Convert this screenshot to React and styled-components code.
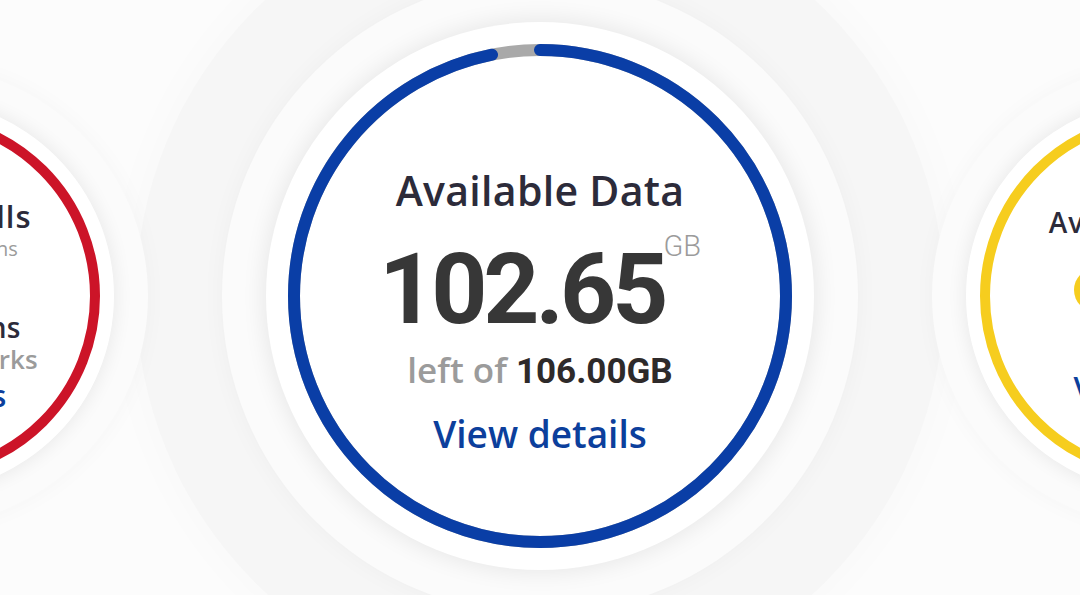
import React from 'react';
import styled, {createGlobalStyle} from 'styled-components';

const COLORS = {
  page: '#fcfcfc',
  white: '#ffffff',
  title: '#2c2b3a',
  number: '#373737',
  muted: '#9b9b9b',
  strong: '#2e2a2a',
  link: '#0c3f9c',
  blue: '#0a3ea6',
  track: '#a9a9a9',
  red: '#cc1428',
  yellow: '#f6cd1e',
};

const GlobalStyle = createGlobalStyle`
  html, body {
    margin: 0;
    padding: 0;
    background: ${COLORS.page};
    overflow: hidden;
  }
  body {
    font-family: "Open Sans", "Noto Sans", sans-serif;
  }
`;

// arc drawn clockwise from startDeg to endDeg (0 = top), caps included
const Ring = ({size, radius, stroke, color, track, startDeg = 0, endDeg = 360}) => {
  const c = size / 2;
  const circ = 2 * Math.PI * radius;
  const full = endDeg - startDeg >= 360;
  const capDeg = (stroke / 2 / radius) * (180 / Math.PI);
  const start = ((startDeg + capDeg) / 360) * circ;
  const len = ((endDeg - startDeg - 2 * capDeg) / 360) * circ;
  return (
    <RingSvg width={size} height={size} viewBox={`0 0 ${size} ${size}`}>
      {track && <circle cx={c} cy={c} r={radius} fill="none" stroke={track} strokeWidth={stroke}/>}
      <circle
        cx={c}
        cy={c}
        r={radius}
        fill="none"
        stroke={color}
        strokeWidth={stroke}
        strokeLinecap="round"
        strokeDasharray={full ? undefined : `${len} ${circ}`}
        strokeDashoffset={full ? undefined : -start}
        transform={`rotate(-90 ${c} ${c})`}
      />
    </RingSvg>
  );
};

const App = () => {
  const left = 102.65;
  const total = 106;

  return (
    <>
      <GlobalStyle/>
      <Stage>
        <Disc $size={394} $side>
          <Ring size={394} radius={178} stroke={10} color={COLORS.red}/>
          <Content $pad={20}>
            <SideTitle>Available Calls</SideTitle>
            <SideNote>Local, STD &amp; ISD mins</SideNote>
            <SideValue $color={COLORS.red}>Unlimited</SideValue>
            <SideStrong>Unlimited mins</SideStrong>
            <SideMuted>across all networks</SideMuted>
            <SideLink href="#">View details</SideLink>
          </Content>
        </Disc>

        <Disc $size={548}>
          <Ring
            size={548}
            radius={246}
            stroke={12}
            color={COLORS.blue}
            track={COLORS.track}
            startDeg={-2}
            endDeg={350}
          />
          <Content $pad={31}>
            <Title>Available Data</Title>
            <Amount>
              <Figure>{left.toFixed(2)}</Figure>
              <Unit>GB</Unit>
            </Amount>
            <Remain>left of <b>{total.toFixed(2)}GB</b></Remain>
            <Link href="#">View details</Link>
          </Content>
        </Disc>

        <Disc $size={394} $side>
          <Ring size={394} radius={178} stroke={10} color={COLORS.yellow}/>
          <Content $pad={18}>
            <SideTitle $small>Available Credit</SideTitle>
            <CreditRow>
              <svg width="44" height="44" viewBox="0 0 44 44">
                <circle cx="22" cy="22" r="22" fill={COLORS.yellow}/>
                <circle cx="22" cy="22" r="15" fill="none" stroke="#e2b70f" strokeWidth="2"/>
              </svg>
              <CreditValue>25.00</CreditValue>
            </CreditRow>
            <SideLink href="#" $right>View details</SideLink>
          </Content>
        </Disc>
      </Stage>
    </>
  );
};

const Stage = styled.main`
  width: 1080px;
  height: 595px;
  display: flex;
  align-items: center;
  justify-content: center;
  gap: 152px;
  overflow: hidden;
`;

const Disc = styled.section`
  position: relative;
  z-index: ${({$side}) => ($side ? 1 : 0)};
  flex: 0 0 auto;
  width: ${({$size}) => $size}px;
  height: ${({$size}) => $size}px;
  margin-top: -3px;
  border-radius: 50%;
  background: ${COLORS.white};
  display: flex;
  align-items: center;
  justify-content: center;
  box-shadow: ${({$side}) => $side
    ? `0 0 18px 2px rgba(0,0,0,0.07),
       0 0 0 34px #fbfbfb,
       0 0 22px 34px rgba(0,0,0,0.03)`
    : `0 0 22px 3px rgba(0,0,0,0.08),
       0 0 0 44px #fbfbfb,
       0 0 24px 44px rgba(0,0,0,0.035),
       0 0 0 130px #f6f6f6,
       0 0 50px 130px rgba(0,0,0,0.025)`};
`;

const RingSvg = styled.svg`
  position: absolute;
  inset: 0;
`;

const Content = styled.div`
  position: relative;
  display: flex;
  flex-direction: column;
  align-items: center;
  white-space: nowrap;
  padding-top: ${({$pad}) => $pad}px;
`;

const Title = styled.h2`
  margin: 0;
  font-size: 41px;
  font-weight: 600;
  line-height: 1.2;
  color: ${COLORS.title};
  letter-spacing: 0.3px;
`;

const Amount = styled.div`
  display: flex;
  align-items: flex-start;
  margin-top: 26px;
`;

const Figure = styled.span`
  font-family: Roboto, "Liberation Sans", sans-serif;
  font-size: 98px;
  font-weight: 700;
  line-height: 1;
  letter-spacing: -4px;
  color: ${COLORS.number};
`;

const Unit = styled.sup`
  font-family: Roboto, "Liberation Sans", sans-serif;
  font-size: 29px;
  font-weight: 300;
  line-height: 1;
  margin: -9px 0 0 -1px;
  color: ${COLORS.muted};
`;

const Remain = styled.p`
  margin: 10px 0 0;
  font-size: 35px;
  font-weight: 600;
  line-height: 1.2;
  color: ${COLORS.muted};

  b {
    font-family: Roboto, "Liberation Sans", sans-serif;
    font-weight: 700;
    color: ${COLORS.strong};
  }
`;

const Link = styled.a`
  margin-top: 19px;
  font-size: 37px;
  font-weight: 600;
  line-height: 1.2;
  color: ${COLORS.link};
  text-decoration: none;
`;

const SideTitle = styled.h3`
  margin: 0;
  font-size: ${({$small}) => ($small ? 28 : 31)}px;
  font-weight: 600;
  line-height: 36px;
  letter-spacing: 1px;
  color: ${COLORS.title};
`;

const SideNote = styled.p`
  margin: 3px 0 0;
  font-size: 20px;
  line-height: 24px;
  color: ${COLORS.muted};
`;

const SideValue = styled.span`
  margin: 8px 0;
  font-family: Roboto, "Liberation Sans", sans-serif;
  font-size: 30px;
  font-weight: 700;
  line-height: 34px;
  color: ${({$color}) => $color};
`;

const CreditValue = styled.span`
  font-family: Roboto, "Liberation Sans", sans-serif;
  font-size: 44px;
  font-weight: 700;
  line-height: 44px;
  color: ${COLORS.number};
`;

const SideStrong = styled.p`
  margin: 0;
  font-size: 28px;
  font-weight: 600;
  line-height: 32px;
  color: ${COLORS.title};
`;

const SideMuted = styled.p`
  margin: 0;
  font-size: 26px;
  font-weight: 600;
  line-height: 32px;
  color: ${COLORS.muted};
`;

const CreditRow = styled.div`
  display: flex;
  align-items: center;
  gap: 20px;
  margin: 28px 0 0;
`;

const SideLink = styled.a`
  margin-top: ${({$right}) => ($right ? 57 : 2)}px;
  font-size: 31px;
  font-weight: 600;
  line-height: 37px;
  color: ${COLORS.link};
  text-decoration: none;
`;

export default App;
